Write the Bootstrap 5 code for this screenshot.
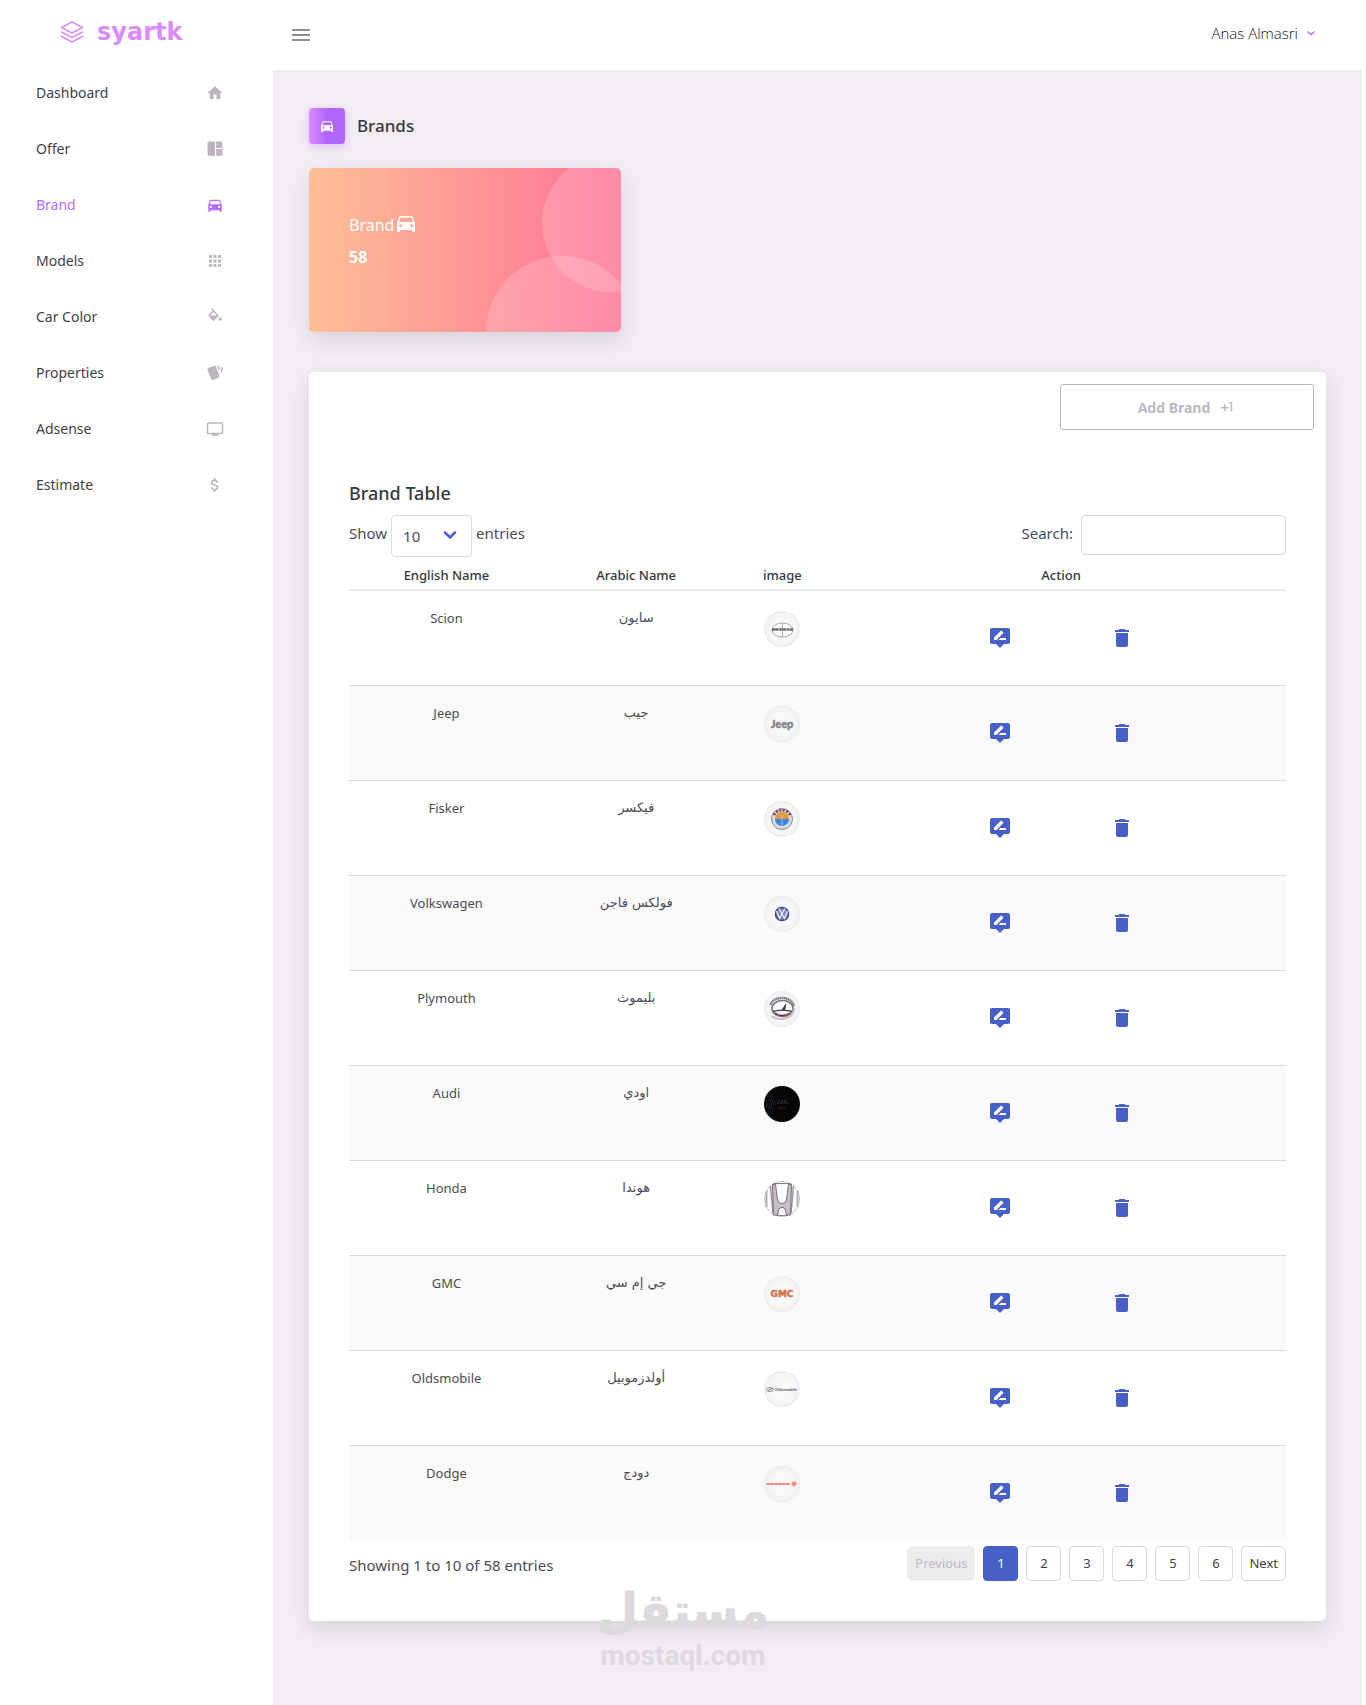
<!DOCTYPE html>
<html lang="en">
<head>
<meta charset="utf-8">
<meta name="viewport" content="width=device-width, initial-scale=1">
<title>syartk - Brands</title>
<link href="https://cdn.jsdelivr.net/npm/bootstrap@5.3.0/dist/css/bootstrap.min.css" rel="stylesheet">
<style>
  body { font-family: "Noto Sans", "DejaVu Sans", sans-serif; font-size: 14px; color: #3e4047; background: #fff; }
  svg { fill: currentColor; flex: none; display: block; }
  .i18 { width: 18px; height: 18px; }
  .i24 { width: 24px; height: 24px; }
  .sidebar { width: 273px; flex: none; }
  .logo-link { height: 64px; color: #da8cff; font: bold 24px/32px "DejaVu Sans", sans-serif; gap: 13px; }
  .side-link { height: 56px; padding: 0 49px 0 36px; color: #3e3f47; }
  .side-link svg { color: #bdb4c0; margin-top: 2px; }
  .side-link.active, .side-link.active svg { color: #b66dff; }
  .topbar { height: 70px; padding: 0 50px 0 19px; }
  .menu-btn { color: #8e8e99; }
  .user-link { color: #111; font-family: "Open Sans", sans-serif; font-weight: 300; font-size: 15px; }
  .user-link svg { color: #b66dff; }
  .page-area { background: #f2edf3; padding: 38px 36px 36px; }
  .page-title { font-size: 17px; line-height: 24px; font-weight: 500; color: #343a40; }
  .panel-title { font-size: 18px; line-height: 24px; font-weight: 500; color: #343a40; margin-bottom: 10px; }
  .title-icon { width: 36px; height: 36px; color: #fff; border-radius: 4px; background: linear-gradient(to right, #da8cff, #b066ff 50%); box-shadow: 0 3px 8px rgba(182, 109, 255, .35); }
  .tiles { --bs-gutter-x: 40px; }
  .stat-tile { height: 164px; padding: 41px 40px; color: #fff; border-radius: 5px; background: linear-gradient(to right, #ffbf96, #fe7096); font-size: 16px; line-height: 24px; }
  .stat-tile .rings { right: 0; top: 0; width: 200px; height: 164px; fill: #fff; fill-opacity: .18; }
  .raised { box-shadow: 0 8px 20px rgba(60, 50, 70, .14); }
  .panel { border-radius: 5px; background: #fff; }
  .add-btn { width: 254px; height: 46px; font-size: 14px; font-weight: 700; color: #bdb8c2; border: 1px solid #b9b5bd; border-radius: 3px; }
  .panel-body { padding: 51px 40px 40px; }
  .tools { font-size: 15px; line-height: 24px; color: #4a4c54; }
  .tools .cap { padding-top: 6px; }
  .tools .form-select { width: 81px; height: 42px; font-size: 15px; border-color: #dbdbe0; border-radius: 4px; padding: 4px 11px; appearance: none; color: #4a4c54; background: none; }
  .tools .form-control { width: 205px; height: 40px; border-color: #d9d9dc; border-radius: 4px; }
  .chev { right: 14px; top: 13px; width: 16px; height: 14px; color: #4660c8; pointer-events: none; }
  .brand-table { table-layout: fixed; color: #4a4c54; font-size: 13px; text-align: center; min-width: 680px; }
  .brand-table th { font-size: 13px; font-weight: 500; line-height: 20px; padding: 8px 0 4px; color: #343a40; border-bottom: 2px solid #ebebee; }
  .brand-table td { height: 95px; line-height: 18px; padding: 18px 0 0; border: 0; border-top: 1px solid #d9d9dc; color: inherit; }
  .brand-table tbody tr:first-child td { border-top-color: #ebebee; }
  .brand-table tbody tr:nth-child(even) td { background: #fafafa; }
  .brand-table td[lang=ar] { font-family: "DejaVu Sans", sans-serif; }
  .brand-pic { width: 36px; height: 36px; margin: 2px auto 0; }
  .acts { gap: 98px; padding-top: 17px; color: #4660c8; }
  .pager { gap: 8px; padding-top: 6px; }
  .pager .page-link { font-size: 13px; line-height: 17px; padding: 8px 7px; min-width: 35px; text-align: center; color: #3e4047; border: 1px solid #d9d9dc; border-radius: 4px; }
  .pager .page-item:not(:first-child) .page-link { margin-left: 0; }
  .pager .active .page-link { background: #4660c8; border-color: #4660c8; color: #fff; }
  .pager .disabled .page-link { background: #ececee; border-color: #ececee; color: #c1b8c2; }
  .stamp { left: 0; right: 0; bottom: 32px; color: #dcd9dd; pointer-events: none; }
  .stamp-ar { font: bold 47px/56px "DejaVu Sans", sans-serif; -webkit-text-stroke: 1px currentColor; }
  .stamp-en { font: bold 28px/34px Roboto, sans-serif; }
</style>
<script src="https://cdn.jsdelivr.net/npm/bootstrap@5.3.0/dist/js/bootstrap.bundle.min.js" defer></script>
</head>
<body>
<svg width="0" height="0" class="position-absolute" aria-hidden="true">
  <symbol id="home" viewBox="0 0 24 24"><path d="M10,20V14H14V20H19V12H22L12,3L2,12H5V20H10Z"/></symbol>
  <symbol id="dash" viewBox="0 0 24 24"><path d="M4 2H12V21H4a2 2 0 0 1-2-2V4a2 2 0 0 1 2-2ZM13.500 2H20a2 2 0 0 1 2 2V10.500H13.500ZM13.500 12H22V19a2 2 0 0 1-2 2H13.500Z"/></symbol>
  <symbol id="car" viewBox="0 0 24 24"><path fill-rule="evenodd" d="M5,11L6.500,6.500H17.500L19,11ZM17.500,16A1.500,1.500 0 0,1 16,14.500A1.500,1.500 0 0,1 17.500,13A1.500,1.500 0 0,1 19,14.500A1.500,1.500 0 0,1 17.500,16M6.500,16A1.500,1.500 0 0,1 5,14.500A1.500,1.500 0 0,1 6.500,13A1.500,1.500 0 0,1 8,14.500A1.500,1.500 0 0,1 6.500,16M18.920,6C18.720,5.420 18.160,5 17.500,5H6.500C5.840,5 5.280,5.420 5.080,6L3,12V20A1,1 0 0,0 4,21H5A1,1 0 0,0 6,20V19H18V20A1,1 0 0,0 19,21H20A1,1 0 0,0 21,20V12L18.920,6Z"/></symbol>
  <symbol id="apps" viewBox="0 0 24 24"><path d="M16,20H20V16H16M16,14H20V10H16M10,8H14V4H10M16,8H20V4H16M10,14H14V10H10M4,14H8V10H4M4,20H8V16H4M10,20H14V16H10M4,8H8V4H4V8Z"/></symbol>
  <symbol id="fill" viewBox="0 0 24 24"><path d="M19,11.500C19,11.500 17,13.670 17,15A2,2 0 0,0 19,17A2,2 0 0,0 21,15C21,13.670 19,11.500 19,11.500M5.210,10L10,5.210L14.790,10M16.560,8.940L7.620,0L6.210,1.410L8.590,3.790L3.440,8.940C2.850,9.500 2.850,10.470 3.440,11.060L8.940,16.560C9.230,16.850 9.620,17 10,17C10.380,17 10.770,16.850 11.060,16.560L16.560,11.060C17.150,10.470 17.150,9.500 16.560,8.940Z"/></symbol>
  <symbol id="cards" viewBox="0 0 24 24"><path d="M21.470,4.350L20.130,3.790V12.820L22.560,6.960C22.970,5.940 22.500,4.770 21.470,4.350M1.970,8.050L6.930,20C7.240,20.770 7.970,21.240 8.740,21.260C9,21.260 9.270,21.210 9.530,21.100L16.900,18.050C17.650,17.740 18.110,17 18.130,16.260C18.140,16 18.090,15.710 18,15.450L13,3.500C12.710,2.730 11.970,2.260 11.190,2.250C10.930,2.250 10.670,2.310 10.420,2.400L3.060,5.450C2.040,5.870 1.550,7.040 1.970,8.050M18.120,4.250A2,2 0 0,0 16.120,2.250H14.670L18.120,10.590"/></symbol>
  <symbol id="tv" viewBox="0 0 24 24"><path d="M21,17H3V5H21M21,3H3A2,2 0 0,0 1,5V17A2,2 0 0,0 3,19H8V21H16V19H21A2,2 0 0,0 23,17V5A2,2 0 0,0 21,3Z"/></symbol>
  <symbol id="usd" viewBox="0 0 24 24"><path d="M11.800 10.900c-2.270-.59-3-1.200-3-2.150 0-1.090 1.010-1.850 2.700-1.850 1.780 0 2.440.85 2.500 2.100h2.210c-.07-1.720-1.120-3.300-3.210-3.810V3h-3v2.160c-1.940.42-3.500 1.680-3.500 3.610 0 2.310 1.910 3.460 4.700 4.130 2.500.6 3 1.480 3 2.410 0 .69-.49 1.790-2.700 1.790-2.060 0-2.870-.92-2.980-2.100h-2.200c.12 2.190 1.760 3.420 3.680 3.830V21h3v-2.150c1.950-.37 3.500-1.500 3.500-3.550 0-2.840-2.430-3.810-4.700-4.400z"/></symbol>
  <symbol id="edit" viewBox="0 0 24 24"><path d="M20,2H4A2,2 0 0,0 2,4V16A2,2 0 0,0 4,18H8L12,22L16,18H20A2,2 0 0,0 22,16V4A2,2 0 0,0 20,2M6,14V11.530L12.880,4.650C13.070,4.450 13.390,4.450 13.590,4.650L15.350,6.420C15.550,6.610 15.550,6.930 15.350,7.120L8.470,14H6M18,14H10.500L12.500,12H18V14Z"/></symbol>
  <symbol id="trash" viewBox="0 0 24 24"><path d="M19,4H15.500L14.500,3H9.500L8.500,4H5V6H19M6,19A2,2 0 0,0 8,21H16A2,2 0 0,0 18,19V7H6V19Z"/></symbol>
  <symbol id="plus1" viewBox="0 0 24 24"><path d="M10,8V12H14V14H10V18H8V14H4V12H8V8H10M14.500,6.080L19,5V18H17V7.400L14.500,7.900V6.080Z"/></symbol>
  <radialGradient id="pearl"><stop offset=".6" stop-color="#f8f8f9"/><stop offset=".9" stop-color="#f2f1f3"/><stop offset="1" stop-color="#ebe8ec"/></radialGradient>
</svg>

<div class="d-flex min-vh-100">
  <nav class="sidebar d-none d-md-block" aria-label="Main">
    <a href="#" class="logo-link d-flex align-items-center text-decoration-none ps-5 ms-2 ms-md-1 mb-0">
      <svg class="ms-2" width="24" height="24" viewBox="0 0 24 24" style="fill:none" stroke="currentColor" stroke-width="1.500" stroke-linejoin="round" stroke-linecap="round"><path d="M12 2 22.500 7.500 12 13 1.500 7.500ZM1.500 12 12 17.500 22.500 12M1.500 16.500 12 22 22.500 16.500"/></svg>
      <span>syartk</span>
    </a>
    <a href="#" class="side-link d-flex align-items-center justify-content-between text-decoration-none">Dashboard<svg class="i18"><use href="#home"/></svg></a>
    <a href="#" class="side-link d-flex align-items-center justify-content-between text-decoration-none">Offer<svg class="i18"><use href="#dash"/></svg></a>
    <a href="#" class="side-link active d-flex align-items-center justify-content-between text-decoration-none" aria-current="page">Brand<svg class="i18"><use href="#car"/></svg></a>
    <a href="#" class="side-link d-flex align-items-center justify-content-between text-decoration-none">Models<svg class="i18"><use href="#apps"/></svg></a>
    <a href="#" class="side-link d-flex align-items-center justify-content-between text-decoration-none">Car Color<svg class="i18"><use href="#fill"/></svg></a>
    <a href="#" class="side-link d-flex align-items-center justify-content-between text-decoration-none">Properties<svg class="i18"><use href="#cards"/></svg></a>
    <a href="#" class="side-link d-flex align-items-center justify-content-between text-decoration-none">Adsense<svg class="i18"><use href="#tv"/></svg></a>
    <a href="#" class="side-link d-flex align-items-center justify-content-between text-decoration-none">Estimate<svg class="i18"><use href="#usd"/></svg></a>
  </nav>

  <div class="d-flex flex-column flex-grow-1" style="min-width:0">
    <header class="topbar d-flex align-items-center justify-content-between">
      <button type="button" class="menu-btn btn p-0 border-0" aria-label="Toggle menu"><svg width="18" height="12" viewBox="0 0 18 12"><path d="M0 0H18V2H0ZM0 5H18V7H0ZM0 10H18V12H0Z"/></svg></button>
      <a href="#" class="user-link d-flex align-items-center gap-2 text-decoration-none pb-1">Anas Almasri<svg width="10" height="8" viewBox="0 0 10 8" style="fill:none" stroke="currentColor" stroke-width="1.500"><path d="M1.500 2.500 5 5.500 8.500 2.500"/></svg></a>
    </header>

    <main class="page-area flex-grow-1 me-1 position-relative">
      <div class="d-flex align-items-center mb-4 gap-2">
        <span class="title-icon d-flex align-items-center justify-content-center"><svg width="16" height="16"><use href="#car"/></svg></span>
        <h1 class="page-title mb-0 ms-1">Brands</h1>
      </div>

      <div class="row tiles mb-4 pb-3">
        <div class="col-md-4">
          <div class="stat-tile raised position-relative overflow-hidden">
            <svg class="rings position-absolute" viewBox="0 0 200 164" preserveAspectRatio="xMaxYMid slice"><circle cx="190" cy="55" r="69"/><circle cx="141" cy="164" r="76"/></svg>
            <div class="d-flex align-items-center position-relative"><span class="pt-1">Brand</span><svg class="i24"><use href="#car"/></svg></div>
            <div class="fw-bold position-relative pt-2">58</div>
          </div>
        </div>
      </div>

      <section class="panel raised">
        <div class="d-flex justify-content-end p-2 pb-0"><button type="button" class="add-btn btn d-flex align-items-center justify-content-center gap-2 m-1 mb-0">Add Brand<svg class="i18"><use href="#plus1"/></svg></button></div>
        <div class="panel-body">
          <h2 class="panel-title">Brand Table</h2>
          <div class="tools d-flex flex-wrap justify-content-between align-items-start">
            <div class="d-flex align-items-start gap-1">
              <label for="len" class="cap">Show</label>
              <span class="position-relative"><select id="len" class="form-select"><option>10</option><option>25</option><option>50</option><option>100</option></select><svg class="chev position-absolute" viewBox="0 0 16 14" style="fill:none" stroke="currentColor" stroke-width="2.500" stroke-linecap="round"><path d="M3 4.500 8 9.500 13 4.500"/></svg></span>
              <span class="cap">entries</span>
            </div>
            <div class="d-flex align-items-start gap-2"><label for="find" class="cap">Search:</label><input id="find" type="search" class="form-control"></div>
          </div>
          <div class="table-responsive">
          <table class="brand-table table mb-0">
            <colgroup><col style="width:20.800%"><col style="width:19.700%"><col style="width:11.500%"><col></colgroup>
            <thead><tr><th>English Name</th><th>Arabic Name</th><th>image</th><th>Action</th></tr></thead>
            <tbody>
              <tr><td>Scion</td><td lang="ar" dir="rtl">سايون</td>
                <td><svg class="brand-pic" viewBox="0 0 36 36"><circle cx="18" cy="18" r="18" fill="url(#pearl)"/><ellipse cx="18.500" cy="19" rx="10.500" ry="7" fill="#fff" stroke="#a9a5ad"/><path d="M18.500 12V26" stroke="#a9a5ad"/><path d="M8 18.500H29" stroke="#6b646c" stroke-width="2.500" stroke-dasharray="3 .6"/><path d="M10 18.500h2" stroke="#a03048"/></svg></td>
                <td><div class="acts d-flex justify-content-center"><a href="#" class="text-reset" aria-label="Edit Scion"><svg class="i24"><use href="#edit"/></svg></a><a href="#" class="text-reset" aria-label="Delete Scion"><svg class="i24"><use href="#trash"/></svg></a></div></td></tr>
              <tr><td>Jeep</td><td lang="ar" dir="rtl">جيب</td>
                <td><svg class="brand-pic" viewBox="0 0 36 36"><circle cx="18" cy="18" r="18" fill="url(#pearl)"/><text x="18" y="22" text-anchor="middle" font-family="Lato" font-weight="900" font-size="11" fill="#85828a" stroke="#85828a" stroke-width=".4">Jeep</text></svg></td>
                <td><div class="acts d-flex justify-content-center"><a href="#" class="text-reset" aria-label="Edit Jeep"><svg class="i24"><use href="#edit"/></svg></a><a href="#" class="text-reset" aria-label="Delete Jeep"><svg class="i24"><use href="#trash"/></svg></a></div></td></tr>
              <tr><td>Fisker</td><td lang="ar" dir="rtl">فيكسر</td>
                <td><svg class="brand-pic" viewBox="0 0 36 36"><circle cx="18" cy="18" r="18" fill="url(#pearl)"/><circle cx="18" cy="18" r="10.500" fill="#dcd9dd" stroke="#8c878f"/><path d="M10 14A9 9 0 0 1 26 14" fill="none" stroke="#7a3b46" stroke-width="2.500" stroke-dasharray="2 1.500"/><path d="M11 18A7 7 0 0 1 25 18Z" fill="#e09a3e"/><path d="M11 18A7 7 0 0 0 25 18Z" fill="#3f83e0"/><path d="M18 14V25" stroke="#b9cdea" stroke-width=".8"/></svg></td>
                <td><div class="acts d-flex justify-content-center"><a href="#" class="text-reset" aria-label="Edit Fisker"><svg class="i24"><use href="#edit"/></svg></a><a href="#" class="text-reset" aria-label="Delete Fisker"><svg class="i24"><use href="#trash"/></svg></a></div></td></tr>
              <tr><td>Volkswagen</td><td lang="ar" dir="rtl">فولكس فاجن</td>
                <td><svg class="brand-pic" viewBox="0 0 36 36"><circle cx="18" cy="18" r="18" fill="url(#pearl)"/><circle cx="18" cy="18" r="6.500" fill="#7d88b8" stroke="#3c4698" stroke-width="1.500"/><path d="M15 12.500 18 18 21 12.500M12.500 15 15.500 22.500 18 18 20.500 22.500 23.500 15" fill="none" stroke="#eceef6" stroke-width="1.300"/></svg></td>
                <td><div class="acts d-flex justify-content-center"><a href="#" class="text-reset" aria-label="Edit Volkswagen"><svg class="i24"><use href="#edit"/></svg></a><a href="#" class="text-reset" aria-label="Delete Volkswagen"><svg class="i24"><use href="#trash"/></svg></a></div></td></tr>
              <tr><td>Plymouth</td><td lang="ar" dir="rtl">بليموث</td>
                <td><svg class="brand-pic" viewBox="0 0 36 36"><circle cx="18" cy="18" r="18" fill="url(#pearl)"/><ellipse cx="18.500" cy="17.500" rx="10.500" ry="8" fill="#fff" stroke="#77727a" stroke-width="1.500"/><path d="M6.500 14Q9 7 18 7T30 15" fill="none" stroke="#77727a" stroke-width="2.500" stroke-dasharray="1.500 .5"/><path d="M30.500 17Q29 27 18 28Q11 28 8 25" fill="none" stroke="#c5c1c8" stroke-width="2"/><path d="M17.500 19 22.500 11.500 21 19.500Z" fill="#333"/><path d="M9 20.500Q18 18 28 20.500" fill="none" stroke="#54505a" stroke-width="1.300"/><path d="M11 22Q18 27 26 22" fill="none" stroke="#6d2f3c" stroke-width="1.300"/></svg></td>
                <td><div class="acts d-flex justify-content-center"><a href="#" class="text-reset" aria-label="Edit Plymouth"><svg class="i24"><use href="#edit"/></svg></a><a href="#" class="text-reset" aria-label="Delete Plymouth"><svg class="i24"><use href="#trash"/></svg></a></div></td></tr>
              <tr><td>Audi</td><td lang="ar" dir="rtl">اودي</td>
                <td><svg class="brand-pic" viewBox="0 0 36 36"><circle cx="18" cy="18" r="18" fill="#070608"/><path d="M2 14H10M1 18H12M2 22H10M4 10H9M4 26H9M6 16H12M3 20H9" stroke="#33363b" stroke-dasharray="1 1"/><path d="M13 17H25M14 15H22" stroke="#3d4046" stroke-dasharray="2 1"/><path d="M15 22H21" stroke="#6a2b45" stroke-dasharray="1.500 1"/></svg></td>
                <td><div class="acts d-flex justify-content-center"><a href="#" class="text-reset" aria-label="Edit Audi"><svg class="i24"><use href="#edit"/></svg></a><a href="#" class="text-reset" aria-label="Delete Audi"><svg class="i24"><use href="#trash"/></svg></a></div></td></tr>
              <tr><td>Honda</td><td lang="ar" dir="rtl">هوندا</td>
                <td><svg class="brand-pic" viewBox="0 0 36 36"><circle cx="18" cy="18" r="17.500" fill="#fdfcfd" stroke="#c9c5cc"/><path d="M2.500 10V26M33.500 10V26" stroke="#b5b0b8" stroke-width="2"/><path d="M6.500 5 9 32M29.500 5 27 32" stroke="#9a959e" stroke-width="1.500"/><path d="M8.500 3.500H11.500L13.500 19Q14 22.500 18 22.500T22.500 19L24.500 3.500H27.500L26.500 34H22.500L21 28Q20.500 26.500 18 26.500T15 28L13.500 34H9.500Z" fill="#c3bfc6" stroke="#75606a" stroke-width=".9"/><path d="M9 2.500H27M12 34.500H24" stroke="#85808a"/></svg></td>
                <td><div class="acts d-flex justify-content-center"><a href="#" class="text-reset" aria-label="Edit Honda"><svg class="i24"><use href="#edit"/></svg></a><a href="#" class="text-reset" aria-label="Delete Honda"><svg class="i24"><use href="#trash"/></svg></a></div></td></tr>
              <tr><td>GMC</td><td lang="ar" dir="rtl">جي إم سي</td>
                <td><svg class="brand-pic" viewBox="0 0 36 36"><circle cx="18" cy="18" r="18" fill="url(#pearl)"/><text x="18" y="21" text-anchor="middle" font-family="DejaVu Sans" font-weight="700" font-size="9" fill="#dd7a45" stroke="#b8623f" stroke-width=".4">GMC</text></svg></td>
                <td><div class="acts d-flex justify-content-center"><a href="#" class="text-reset" aria-label="Edit GMC"><svg class="i24"><use href="#edit"/></svg></a><a href="#" class="text-reset" aria-label="Delete GMC"><svg class="i24"><use href="#trash"/></svg></a></div></td></tr>
              <tr><td>Oldsmobile</td><td lang="ar" dir="rtl">أولدزموبيل</td>
                <td><svg class="brand-pic" viewBox="0 0 36 36"><circle cx="18" cy="18" r="18" fill="url(#pearl)"/><ellipse cx="6" cy="18.500" rx="3.500" ry="2" fill="none" stroke="#77727a" stroke-width=".8"/><path d="M4 19.500 9 17" stroke="#77727a"/><text x="22" y="20" text-anchor="middle" font-family="Liberation Sans" font-weight="700" font-size="4" fill="#55505a">Oldsmobile</text></svg></td>
                <td><div class="acts d-flex justify-content-center"><a href="#" class="text-reset" aria-label="Edit Oldsmobile"><svg class="i24"><use href="#edit"/></svg></a><a href="#" class="text-reset" aria-label="Delete Oldsmobile"><svg class="i24"><use href="#trash"/></svg></a></div></td></tr>
              <tr><td>Dodge</td><td lang="ar" dir="rtl">دودج</td>
                <td><svg class="brand-pic" viewBox="0 0 36 36"><circle cx="18" cy="18" r="18" fill="url(#pearl)"/><path d="M2.500 18H26" stroke="#fb7f7c" stroke-width="2.200" stroke-dasharray="3.500 .4"/><path d="M27.500 16Q30 15 32.500 16V18.500L30 21 27.500 18.500Z" fill="#fb8a8a"/></svg></td>
                <td><div class="acts d-flex justify-content-center"><a href="#" class="text-reset" aria-label="Edit Dodge"><svg class="i24"><use href="#edit"/></svg></a><a href="#" class="text-reset" aria-label="Delete Dodge"><svg class="i24"><use href="#trash"/></svg></a></div></td></tr>
            </tbody>
          </table>
          </div>
          <div class="tools d-flex flex-wrap justify-content-between align-items-end">
            <span class="pb-1">Showing 1 to 10 of 58 entries</span>
            <ul class="pager pagination mb-0">
              <li class="page-item disabled"><a class="page-link" aria-disabled="true">Previous</a></li>
              <li class="page-item active"><a class="page-link" href="#" aria-current="page">1</a></li>
              <li class="page-item"><a class="page-link" href="#">2</a></li>
              <li class="page-item"><a class="page-link" href="#">3</a></li>
              <li class="page-item"><a class="page-link" href="#">4</a></li>
              <li class="page-item"><a class="page-link" href="#">5</a></li>
              <li class="page-item"><a class="page-link" href="#">6</a></li>
              <li class="page-item"><a class="page-link" href="#">Next</a></li>
            </ul>
          </div>
        </div>
      </section>
    </main>
  </div>
</div>
<div class="stamp position-absolute text-center"><div class="stamp-ar" lang="ar">مستقل</div><div class="stamp-en">mostaql.com</div></div>
</body>
</html>
